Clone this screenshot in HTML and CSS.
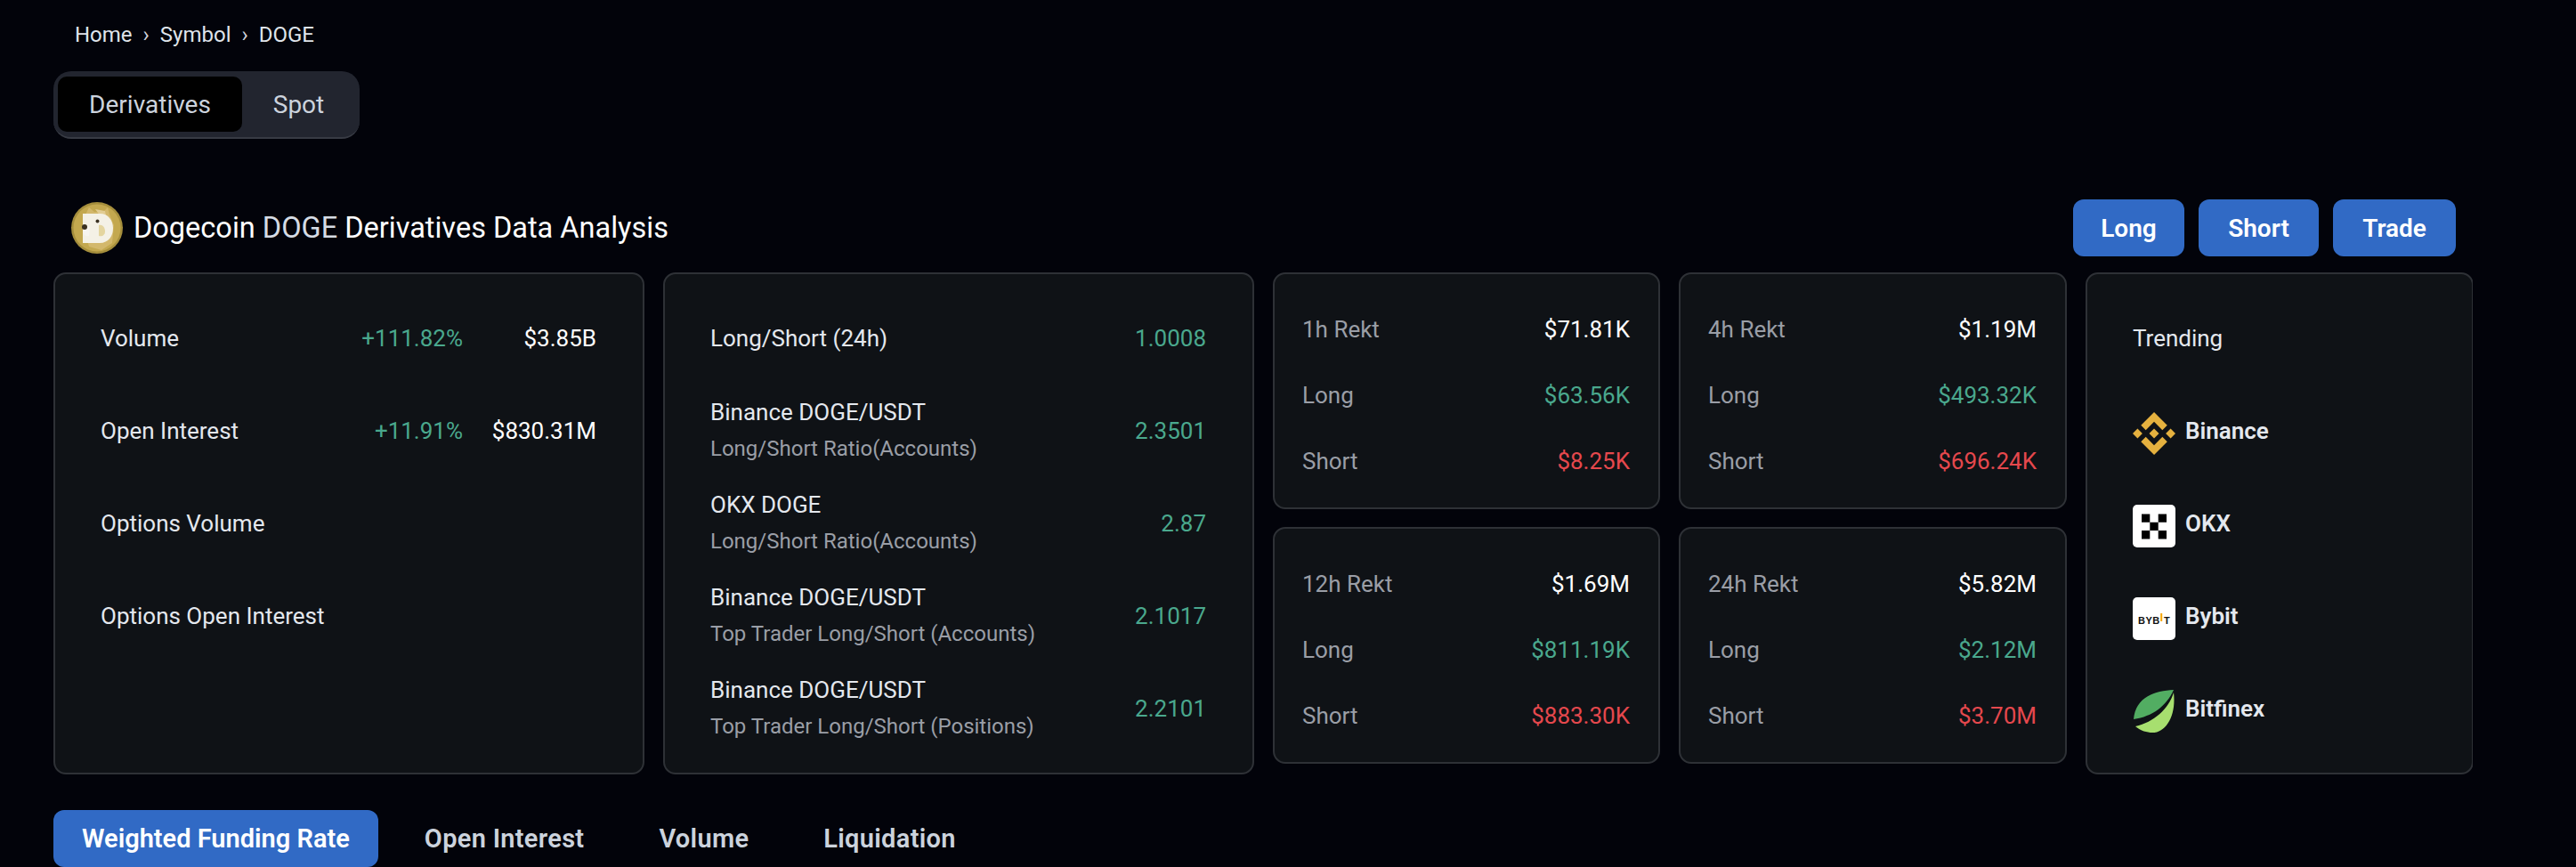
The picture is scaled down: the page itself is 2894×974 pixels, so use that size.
FILE: index.html
```html
<!DOCTYPE html>
<html lang="en">
<head>
    <meta charset="UTF-8">
    <meta name="viewport" content="width=device-width, initial-scale=1.0">
    <title>DOGE Derivatives Data Analysis</title>
    <link rel="stylesheet" href="styles.css">
</head>
<body>
    <div class="page">
        <div class="breadcrumb">
            <span>Home</span><span class="sep">›</span><span>Symbol</span><span class="sep">›</span><span>DOGE</span>
        </div>

        <div class="market-switch">
            <div class="market-option active">Derivatives</div>
            <div class="market-option">Spot</div>
        </div>

        <div class="title-row">
            <div class="title">
                <svg class="coin" viewBox="0 0 58 58">
                    <circle cx="29" cy="29" r="29" fill="#a58e3c"/>
                    <circle cx="29" cy="29" r="26.5" fill="#c3a84f"/>
                    <path d="M17 12l3-6 6 5h10l5-5 2 8 5 12-2 20-12 8-14-4-6-20z" fill="#d3b86c"/>
                    <path d="M27 8l6 8 7 4-2-10z" fill="#e2cd94"/>
                    <path d="M13 13H32C42 13 47 21 47 29.5C47 38 42 46 32 46H13Z" fill="#f4f1e6"/>
                    <path d="M31 26c5-1 7 3 7 7s-3 6-7 5z" fill="#e4d59f"/>
                    <path d="M21 28c-5-1-8 2-8 5s3 6 7 5z" fill="#f7f5ef"/>
                    <circle cx="15" cy="28" r="3" fill="#3a3122"/>
                    <circle cx="29.500" cy="21.500" r="2" fill="#3a3122"/>
                </svg>
                <h1>Dogecoin <span class="symbol">DOGE</span> Derivatives Data Analysis</h1>
            </div>
            <div class="actions">
                <button class="button">Long</button>
                <button class="button">Short</button>
                <button class="button">Trade</button>
            </div>
        </div>

        <div class="cards">
            <div class="card wide">
                <div class="row"><span class="label">Volume</span><span class="up">+111.82%</span><span class="value">$3.85B</span></div>
                <div class="row"><span class="label">Open Interest</span><span class="up">+11.91%</span><span class="value">$830.31M</span></div>
                <div class="row"><span class="label">Options Volume</span></div>
                <div class="row"><span class="label">Options Open Interest</span></div>
            </div>

            <div class="card wide">
                <div class="row"><span class="label">Long/Short (24h)</span><span class="up">1.0008</span></div>
                <div class="row">
                    <div class="label">Binance DOGE/USDT<small>Long/Short Ratio(Accounts)</small></div>
                    <span class="up">2.3501</span>
                </div>
                <div class="row">
                    <div class="label">OKX DOGE<small>Long/Short Ratio(Accounts)</small></div>
                    <span class="up">2.87</span>
                </div>
                <div class="row">
                    <div class="label">Binance DOGE/USDT<small>Top Trader Long/Short (Accounts)</small></div>
                    <span class="up">2.1017</span>
                </div>
                <div class="row">
                    <div class="label">Binance DOGE/USDT<small>Top Trader Long/Short (Positions)</small></div>
                    <span class="up">2.2101</span>
                </div>
            </div>

            <div class="rekt-grid">
                <div class="card rekt">
                    <div class="rekt-row"><span class="muted">1h Rekt</span><span class="total">$71.81K</span></div>
                    <div class="rekt-row"><span class="muted">Long</span><span class="up">$63.56K</span></div>
                    <div class="rekt-row"><span class="muted">Short</span><span class="down">$8.25K</span></div>
                </div>
                <div class="card rekt">
                    <div class="rekt-row"><span class="muted">4h Rekt</span><span class="total">$1.19M</span></div>
                    <div class="rekt-row"><span class="muted">Long</span><span class="up">$493.32K</span></div>
                    <div class="rekt-row"><span class="muted">Short</span><span class="down">$696.24K</span></div>
                </div>
                <div class="card rekt">
                    <div class="rekt-row"><span class="muted">12h Rekt</span><span class="total">$1.69M</span></div>
                    <div class="rekt-row"><span class="muted">Long</span><span class="up">$811.19K</span></div>
                    <div class="rekt-row"><span class="muted">Short</span><span class="down">$883.30K</span></div>
                </div>
                <div class="card rekt">
                    <div class="rekt-row"><span class="muted">24h Rekt</span><span class="total">$5.82M</span></div>
                    <div class="rekt-row"><span class="muted">Long</span><span class="up">$2.12M</span></div>
                    <div class="rekt-row"><span class="muted">Short</span><span class="down">$3.70M</span></div>
                </div>
            </div>

            <div class="card wide">
                <div class="row"><span class="label">Trending</span></div>
                <div class="row exchange">
                    <svg class="logo" viewBox="0 0 126.61 126.61" fill="#e5b13f">
                        <path d="M38.73 53.2l24.59-24.58 24.6 24.6 14.3-14.31L63.32 0 24.42 38.9l14.31 14.3z"/>
                        <path d="M0 63.31l14.3-14.31 14.31 14.31-14.31 14.3z"/>
                        <path d="M38.73 73.41L63.32 98l24.6-24.6 14.31 14.29-38.9 38.91-38.91-38.88-.02-.02z"/>
                        <path d="M98 63.31l14.3-14.31 14.31 14.3-14.31 14.32z"/>
                        <path d="M77.83 63.3L63.32 48.78 52.59 59.51l-1.24 1.23-2.54 2.54 14.51 14.5 14.51-14.47z"/>
                    </svg>
                    <span>Binance</span>
                </div>
                <div class="row exchange">
                    <svg class="logo" viewBox="0 0 48 48">
                        <rect width="48" height="48" rx="5" fill="#fff"/>
                        <path d="M10 10.500h9.300v9.300H10zM28.700 10.500H38v9.300h-9.300zM19.300 19.800h9.400v9.300h-9.400zM10 29.100h9.300v9.300H10zM28.700 29.100H38v9.300h-9.300z" fill="#000"/>
                    </svg>
                    <span>OKX</span>
                </div>
                <div class="row exchange">
                    <svg class="logo" viewBox="0 0 48 48">
                        <rect width="48" height="48" rx="5" fill="#fff"/>
                        <text class="bybit-text" x="6" y="30">BYB</text>
                        <rect x="31.200" y="18" width="2" height="9" fill="#f7a600"/>
                        <text class="bybit-text" x="35" y="30">T</text>
                    </svg>
                    <span>Bybit</span>
                </div>
                <div class="row exchange">
                    <svg class="logo" viewBox="0 0 48 48">
                        <path d="M46 0C25 1 3 8 1 33C22 30 38 18 46 0Z" fill="#52ad62"/>
                        <path d="M46 3C40 22 24 36 3 41C9 46 16 48 22 48C38 48 49 28 46 3Z" fill="#a7df6f"/>
                    </svg>
                    <span>Bitfinex</span>
                </div>
            </div>
        </div>

        <div class="tabs">
            <div class="tab active">Weighted Funding Rate</div>
            <div class="tab">Open Interest</div>
            <div class="tab">Volume</div>
            <div class="tab">Liquidation</div>
        </div>
    </div>
</body>
</html>
```

FILE: styles.css
```css
html, body {
    height: 100%;
    margin: 0;
}
body {
    background-color: #02030a;
    color: #e4e8ee;
    font-family: Roboto, Arial, sans-serif;
    font-size: 26px;
    overflow: hidden;
}
.page {
    width: 2718px;
    height: 974px;
    margin-left: 60px;
    overflow: hidden;
}
.breadcrumb {
    display: flex;
    align-items: center;
    gap: 12px;
    height: 78px;
    padding-bottom: 2px;
    padding-left: 24px;
    font-size: 24px;
    color: #dfe4ea;
}
.sep {
    color: #cfd4dc;
}
.market-switch {
    display: flex;
    width: 344px;
    box-sizing: border-box;
    height: 76px;
    padding: 6px 5px;
    background-color: #22252f;
    border-bottom: 2px solid #383b44;
    border-radius: 20px;
    font-size: 28px;
    color: #ccd3dd;
}
.market-option {
    display: flex;
    align-items: center;
    justify-content: center;
    flex: 1;
    border-radius: 10px;
}
.market-option.active {
    flex: 0 0 207px;
    background-color: #000;
}
.title-row {
    display: flex;
    justify-content: space-between;
    align-items: center;
    height: 64px;
    margin-top: 68px;
    padding: 0 19px 0 20px;
}
.title {
    display: flex;
    align-items: center;
    gap: 12px;
}
.coin {
    width: 58px;
    height: 58px;
}
.title h1 {
    margin: 0;
    font-size: 32.500px;
    font-weight: 400;
    color: #fff;
}
.symbol {
    color: #d5dbe4;
}
.actions {
    display: grid;
    grid-template-columns: 125px 135px 138px;
    gap: 16px;
}
.button {
    height: 64px;
    padding: 0;
    background-color: #316ac5;
    border: none;
    border-radius: 12px;
    color: #fff;
    font-family: inherit;
    font-size: 28px;
    font-weight: 600;
}
.cards {
    display: grid;
    grid-template-columns: 664px 664px 892px 436px;
    gap: 21px;
    height: 563px;
    margin-top: 18px;
}
.card {
    box-sizing: border-box;
    padding: 20px 52px 20px 51px;
    background-color: #0f1216;
    border: 2px solid #2e3136;
    border-radius: 14px;
}
.row {
    display: flex;
    align-items: center;
    height: 104px;
}
.label {
    flex: 1;
    line-height: 41px;
}
.label small {
    display: block;
    font-size: 24px;
    color: #9a9ea6;
}
.value {
    width: 150px;
    text-align: right;
    color: #fff;
}
.up {
    color: #4aa88d;
}
.down {
    color: #e5484d;
}
.rekt-grid {
    display: grid;
    grid-template-columns: 435px 436px;
    grid-template-rows: 266px 266px;
    gap: 20px 21px;
}
.card.rekt {
    padding: 25px 32px 15px 31px;
}
.rekt-row {
    display: flex;
    justify-content: space-between;
    align-items: center;
    height: 74px;
}
.muted {
    color: #9a9ea6;
}
.total {
    color: #fff;
}
.exchange {
    gap: 11px;
    font-weight: 600;
}
.logo {
    width: 48px;
    height: 48px;
    margin-top: 6px;
}
.bybit-text {
    font-family: "Liberation Sans", Arial, sans-serif;
    font-size: 11px;
    font-weight: 700;
    letter-spacing: 0.5px;
    fill: #111;
}
.tabs {
    display: flex;
    gap: 20px;
    margin-top: 41px;
}
.tab {
    display: flex;
    align-items: center;
    height: 64px;
    padding: 0 32px;
    border-radius: 12px;
    font-size: 29px;
    font-weight: 600;
    letter-spacing: 0.3px;
    color: #ccd3dd;
}
.tab.active {
    background-color: #316ac5;
    color: #fff;
    letter-spacing: 0;
}
```
